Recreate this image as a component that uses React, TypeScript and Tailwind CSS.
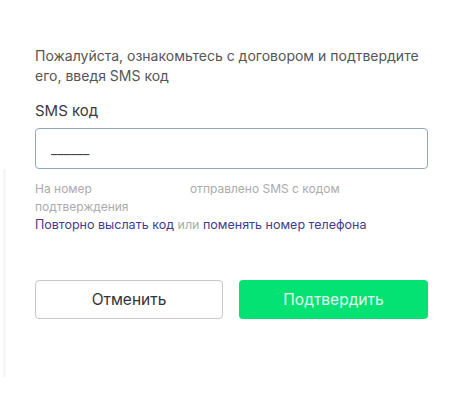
import React, { useState } from "react";

export default function App() {
  const [code, setCode] = useState("");

  return (
    <div
      className="w-[475px] h-[397px] bg-white overflow-hidden"
      style={{ fontFamily: "Inter, 'Noto Sans', sans-serif" }}
    >
      <div className="pt-[46px] px-[35px]">
        <p className="text-[14px] leading-[20px] text-[#555555] pr-[5px]">
          Пожалуйста, ознакомьтесь с договором и подтвердите его, введя SMS код
        </p>
        <label className="block mt-[15px] text-[15px] leading-[20px] text-[#3a3a3a]">
          SMS код
        </label>
        <input
          value={code}
          onChange={(e) => setCode(e.target.value)}
          placeholder="______"
          className="mt-[7px] block w-[393px] h-[41px] rounded-[4px] border border-[#8fa9bb] px-[15px] text-[14px] text-[#333] placeholder-[#444] focus:outline-none"
        />
      </div>

      {/* lower section with faint left edge */}
      <div className="ml-[3px] border-l-[3px] border-[#f6f6f6] h-[208px] pl-[29px] pr-[35px] pt-[11px]">
        <p className="text-[12px] leading-[18px] text-[#ababab]">
          <span className="mr-[98px]">На номер</span>
          <span>отправлено SMS с кодом</span>
          <br />
          <span>подтверждения</span>
        </p>
        <p className="text-[12.5px] leading-[17px] text-[#aaaaaa]">
          <a className="text-[#3f3d8e]">Повторно выслать код</a> или{" "}
          <a className="text-[#3f3d8e]">поменять номер телефона</a>
        </p>
        <div className="mt-[47px] flex gap-[16px]">
          <button className="w-[188px] h-[39px] rounded-[4px] border border-[#c8c8c8] bg-white text-[15.5px] text-[#333]">
            Отменить
          </button>
          <button className="w-[189px] h-[39px] rounded-[4px] bg-[#03e273] text-[15.5px] text-[#e6fbee]">
            Подтвердить
          </button>
        </div>
      </div>
    </div>
  );
}
